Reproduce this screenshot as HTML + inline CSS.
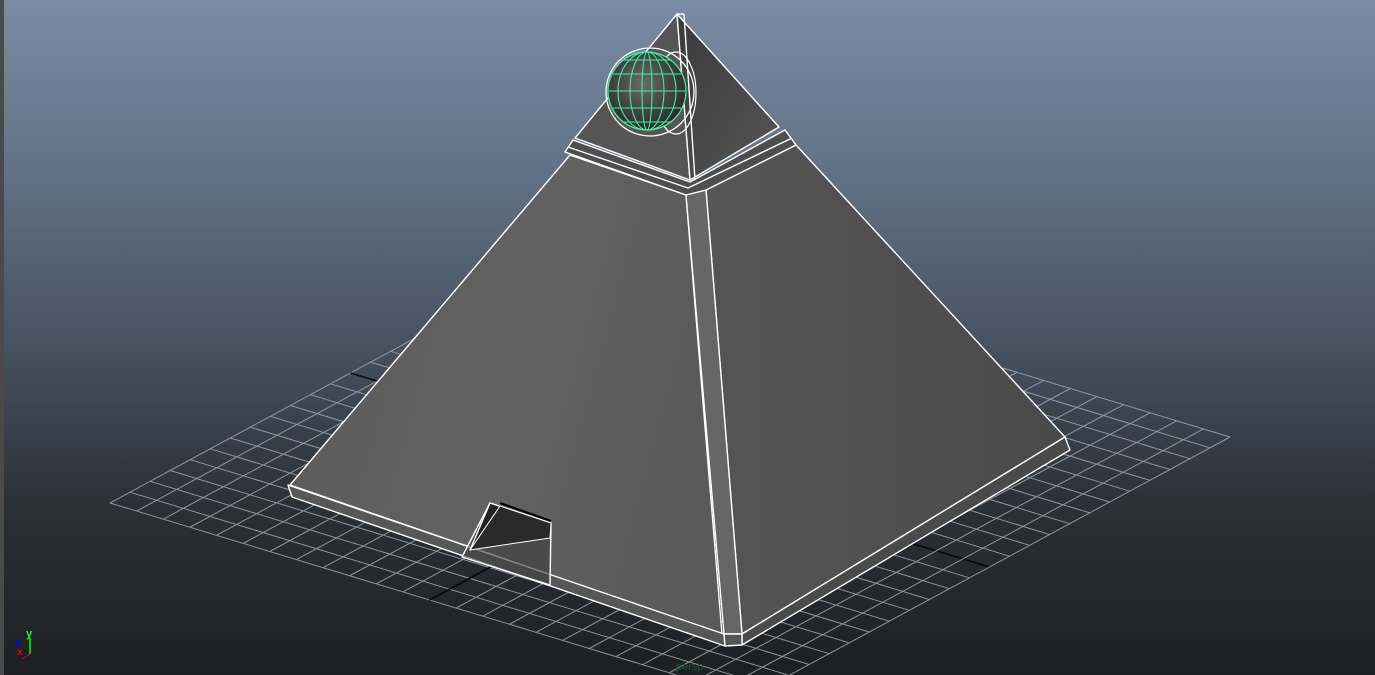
<!DOCTYPE html>
<html><head><style>
html,body{margin:0;padding:0;width:1375px;height:675px;overflow:hidden}
body{background:linear-gradient(#7a8ba3 0px,#65758a 150px,#4a5563 330px,#2c3137 500px,#1d1f22 675px);position:relative}
#bar{position:absolute;left:0;top:0;width:4px;height:675px;background:#4a4a4a}
svg{position:absolute;left:0;top:0}
.t{font-family:"Liberation Sans",sans-serif;font-weight:bold}
</style></head><body>
<div id="bar"></div>
<svg width="1375" height="675" viewBox="0 0 1375 675">
<defs>
<linearGradient id="lf" x1="0" y1="0" x2="1" y2="0.3">
<stop offset="0" stop-color="#5a5a5a"/><stop offset="0.6" stop-color="#626262"/><stop offset="1" stop-color="#5a5a5a"/></linearGradient>
<linearGradient id="rf" x1="0" y1="0" x2="1" y2="0">
<stop offset="0" stop-color="#555"/><stop offset="1" stop-color="#4a4a4a"/></linearGradient>
<linearGradient id="tr" x1="0" y1="0" x2="1" y2="1">
<stop offset="0" stop-color="#3a3a3a"/><stop offset="1" stop-color="#565656"/></linearGradient>
<radialGradient id="sp" cx="0.45" cy="0.4" r="0.6">
<stop offset="0" stop-color="#6a6a6a"/><stop offset="1" stop-color="#2a2a2a"/></radialGradient>
</defs>
<g id="grid" stroke="#a0a6ae" stroke-width="1" opacity="0.85"></g>
<g stroke="#fff" stroke-width="1.4" stroke-linejoin="round">
<polygon points="570,155 686,195 722,634 290,485" fill="url(#lf)"/>
<polygon points="706,190 796,145 1065,437 742,634" fill="url(#rf)"/>
<polygon points="686,195 706,190 742,634 724,634" fill="#666"/>
<polygon points="288,485 724,634 725,646 292,497" fill="#575757"/>
<polygon points="742,634 1065,437 1070,450 742,645" fill="#4a4a4a"/>
<polygon points="724,634 742,634 742,645 725,646" fill="#555"/>
<polygon points="573,140 690,182 785,130 796,145 706,190 686,195 565,152" fill="#4e4e4e"/>
<polyline points="568,147 688,188 792,138" fill="none"/>
<polygon points="677,14 575,138 690,180" fill="#555"/>
<polygon points="677,14 690,180 779,127" fill="url(#tr)"/>
<line x1="677" y1="14" x2="684" y2="14"/>
<line x1="684" y1="14" x2="695" y2="180"/>
<polygon points="490,503 551,523 550,585 462,557" fill="rgba(60,60,60,0.6)"/>
<polygon points="490,503 520,513 470,550" fill="#222"/>
<polygon points="500,506 551,523 550,538 470,550" fill="#2a2a2a" stroke-width="1"/>
<line x1="500" y1="503" x2="551" y2="521" stroke="#000" stroke-width="2"/>
</g>
<g>
<circle cx="650" cy="92" r="44" fill="none" stroke="#fff" stroke-width="1.3"/>
<ellipse cx="676" cy="93" rx="20" ry="41" fill="none" stroke="#fff" stroke-width="1.2"/>
<circle cx="647" cy="91" r="39" fill="url(#sp)" stroke="#3ef0a0" stroke-width="1.3"/>
<g fill="none" stroke="#3ef0a0" stroke-width="1.1">
<ellipse cx="647" cy="91" rx="29" ry="39"/>
<ellipse cx="647" cy="91" rx="17" ry="39"/>
<ellipse cx="647" cy="91" rx="5" ry="39"/>
<line x1="609" y1="91" x2="685" y2="91"/>
<line x1="613" y1="74" x2="681" y2="74"/>
<line x1="613" y1="108" x2="681" y2="108"/>
<line x1="622" y1="60" x2="672" y2="60"/>
<line x1="622" y1="122" x2="672" y2="122"/>
</g>
</g>
<line x1="30" y1="638" x2="30" y2="654" stroke="#0f0" stroke-width="1.5"/>
<line x1="30" y1="654" x2="23" y2="658" stroke="#00f" stroke-width="1.5"/>
<line x1="30" y1="654" x2="22" y2="659" stroke="#e00" stroke-width="1"/>
<text x="26" y="637" fill="#1f1" class="t" font-size="11">y</text>
<text x="15" y="646" fill="#00f" class="t" font-size="11">z</text>
<text x="17" y="655" fill="#e00" class="t" font-size="10">x</text>
<text x="676" y="670" fill="#0b5f2e" font-family="Liberation Sans,sans-serif" font-size="11">persp</text>
</svg>
<script>
(function(){
var g=document.getElementById('grid'),ns='http://www.w3.org/2000/svg';
var L=[110,503],T=[591,243],R=[1230,437],B=[749,697],N=24;
function P(u,v){
 var a=[L[0]+(T[0]-L[0])*u,L[1]+(T[1]-L[1])*u];
 var b=[B[0]+(R[0]-B[0])*u,B[1]+(R[1]-B[1])*u];
 return [a[0]+(b[0]-a[0])*v,a[1]+(b[1]-a[1])*v];}
function ln(p,q,c){var l=document.createElementNS(ns,'line');l.setAttribute('x1',p[0]);l.setAttribute('y1',p[1]);l.setAttribute('x2',q[0]);l.setAttribute('y2',q[1]);if(c){l.setAttribute('stroke',c);l.setAttribute('stroke-width','1.6');}g.appendChild(l);}
for(var i=0;i<=N;i++){var t=i/N;var c=(i==N/2)?'#000':null;ln(P(t,0),P(t,1),c);ln(P(0,t),P(1,t),c);}
})();
</script>
</body></html>
